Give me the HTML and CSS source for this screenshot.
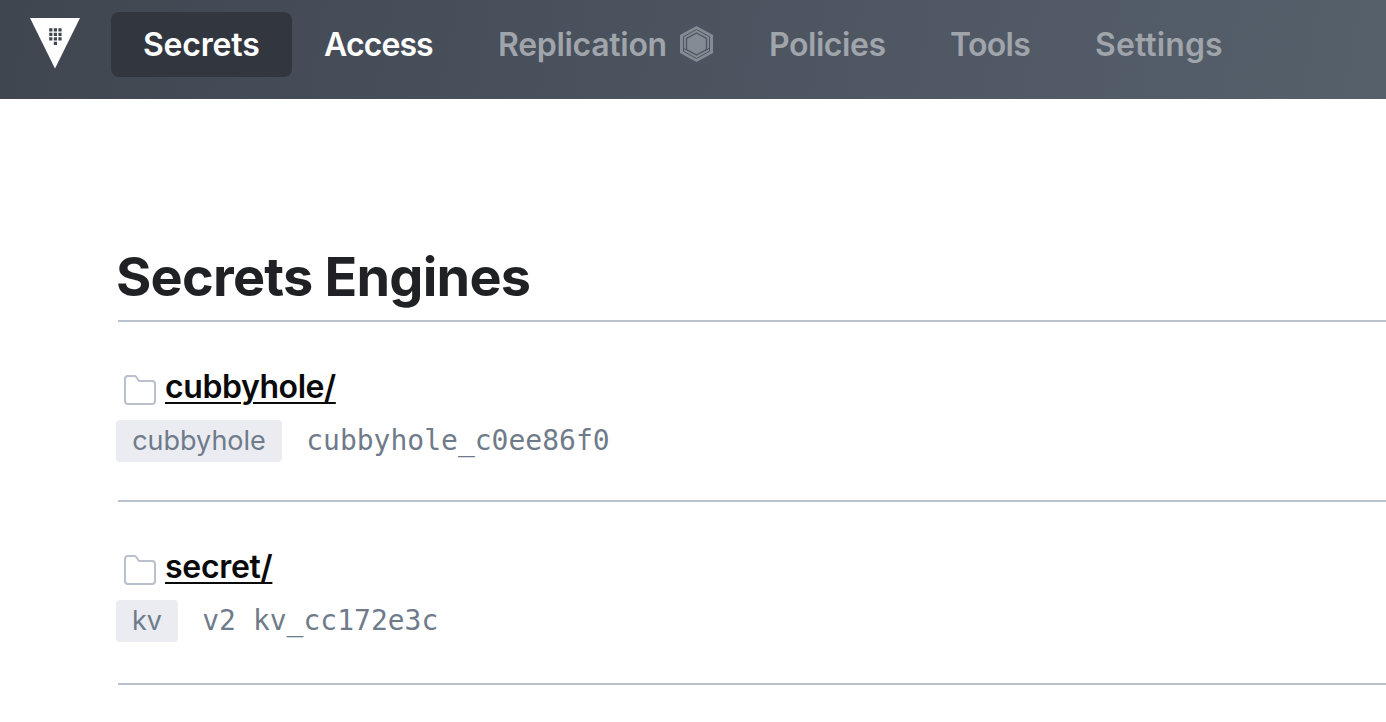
FILE: index.html
```
<!DOCTYPE html>
<html lang="en">
<head>
<meta charset="utf-8">
<title>Vault</title>
<link rel="stylesheet" href="styles.css">
</head>
<body>
<header class="navbar">
  <svg class="logo" width="50" height="51" viewBox="0 0 50 51"><path fill="#fff" d="M0 0h50L25 50.500z"/><path fill="#3f4651" d="M19.200 10.200h3.200v3.200h-3.200zm4.600 0h3.200v3.200h-3.200zm4.600 0h3.200v3.200h-3.200zM19.200 14.800h3.200v3.200h-3.200zm4.600 0h3.200v3.200h-3.200zm4.600 0h3.200v3.200h-3.200zM19.200 19.300h3.200v3.200h-3.200zm4.600 0h3.200v3.200h-3.200zm4.600 0h3.200v3.200h-3.200zM23.800 23.700h3.200v3.200h-3.200z"/></svg>
  <nav class="menu">
    <a class="item secrets active">Secrets</a>
    <a class="item access">Access</a>
    <a class="item replication">Replication<svg class="hex" width="33" height="36" viewBox="0 0 33 36"><path d="M16.500 0L33 9v18l-16.500 9L0 27V9z" fill="#858b94"/><path d="M16.500 3.500L29.500 10.700v14.600L16.500 32.500 3.500 25.300V10.700z" fill="none" stroke="#4c5560" stroke-width="1"/><path d="M16.500 7L26.500 12.500v11L16.500 29 6.500 23.500v-11z" fill="none" stroke="#4c5560" stroke-width="1.300"/><path d="M4 22.500l2.500 1.500M29 22.500L26.500 24" stroke="#4c5560" stroke-width="1"/></svg></a>
    <a class="item policies">Policies</a>
    <a class="item tools">Tools</a>
    <a class="item settings">Settings</a>
  </nav>
</header>
<main class="page">
  <h1 class="title">Secrets Engines</h1>
  <section class="engine">
    <div class="head"><svg class="folder" width="32" height="30" viewBox="0 0 32 30"><path d="M1 26V4a3 3 0 0 1 3-3h6.500a2 2 0 0 1 1.600.8L15 6h13a3 3 0 0 1 3 3v17a3 3 0 0 1-3 3H4a3 3 0 0 1-3-3z"/></svg><a class="name">cubbyhole/</a></div>
    <div class="meta"><span class="tag tag-cubby">cubbyhole</span><code class="code">cubbyhole_c0ee86f0</code></div>
  </section>
  <section class="engine last">
    <div class="head"><svg class="folder" width="32" height="30" viewBox="0 0 32 30"><path d="M1 26V4a3 3 0 0 1 3-3h6.500a2 2 0 0 1 1.600.8L15 6h13a3 3 0 0 1 3 3v17a3 3 0 0 1-3 3H4a3 3 0 0 1-3-3z"/></svg><a class="name short">secret/</a></div>
    <div class="meta"><span class="tag tag-kv">kv</span><code class="code"><span class="version">v2</span>kv_cc172e3c</code></div>
  </section>
</main>
</body>
</html>
```
FILE: styles.css
```
* { box-sizing: border-box; }
body { margin: 0; background: #fff; font-family: Inter, sans-serif; overflow: hidden; }
.navbar { height: 99px; display: flex; align-items: flex-start; padding: 12px 0 0 30px; background: linear-gradient(100deg, #3f4650, #4a525e 45%, #56606b); }
.logo { margin-top: 6px; margin-right: 31px; flex: none; }
.menu { display: flex; height: 65px; }
.item { display: flex; flex: none; align-items: center; padding-left: 32px; height: 65px; border-radius: 8px; color: #a0a4ab; font-size: 32px; font-weight: 600; white-space: nowrap; }
.secrets { width: 181px; letter-spacing: -0.200px; }
.access { width: 174px; letter-spacing: -0.900px; }
.replication { width: 271px; letter-spacing: -0.300px; }
.policies { width: 181px; letter-spacing: -0.450px; }
.tools { width: 145px; letter-spacing: -0.700px; }
.settings { letter-spacing: 0.100px; }
.active { background: #31363f; color: #fff; }
.access { color: #fff; }
.hex { margin: 0 24px 2px auto; }
.page { padding: 146px 0 0 118px; }
.title { margin: 0; height: 77px; font-size: 54px; line-height: 64px; font-weight: 700; letter-spacing: -0.760px; color: #1f2124; border-bottom: 2px solid #bac1cc; text-indent: -2px; }
.engine { height: 180px; padding-top: 43px; border-bottom: 2px solid #bac1cc; }
.last { height: 183px; }
.head { display: flex; height: 44px; padding-left: 6px; }
.folder { margin: 10px 9px 0 0; fill: none; stroke: #bac1cc; stroke-width: 2; }
.name { font-size: 32px; line-height: 44px; font-weight: 600; letter-spacing: -0.420px; color: #0a0a0a; text-decoration: underline; text-decoration-thickness: 2px; text-underline-offset: 4px; }
.short { letter-spacing: -0.300px; }
.meta { display: flex; align-items: center; margin: 11px 0 0 -2px; height: 42px; color: #6f7b8a; }
.tag { display: flex; align-items: center; justify-content: center; height: 42px; padding-bottom: 2px; border-radius: 4px; background: #ebecf2; font-size: 27px; }
.tag-cubby { width: 166px; }
.tag-kv { width: 62px; }
.code { margin: 0 0 2px 24.200px; font-family: "DejaVu Sans Mono", monospace; font-size: 28px; }
.version { margin-right: 17px; }
```
